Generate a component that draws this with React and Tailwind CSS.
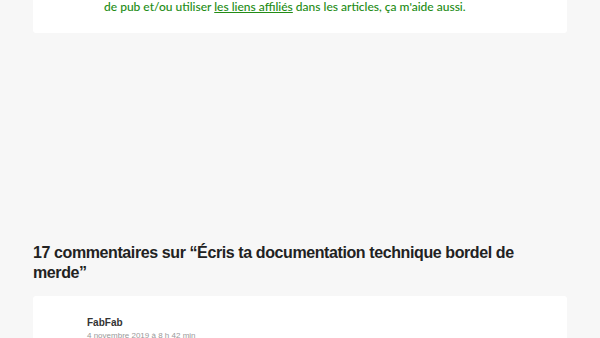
export default function App() {
  return (
    <div className="w-[600px] h-[338px] overflow-hidden bg-[#f7f7f7]">
      <div className="mx-[33px] -mt-[20px] bg-white rounded-b-[3px] pt-[19px] pb-[18px] pl-[71px]">
        <p
          className="text-[12px] leading-[16px] text-[#238c15] font-medium"
          style={{ fontFamily: 'Lato, sans-serif' }}
        >
          de pub et/ou utiliser <a className="underline">les liens affiliés</a> dans les articles, ça m'aide aussi.
        </p>
      </div>

      <div className="h-[210px]" />

      <h2
        className="mx-[33px] text-[16px] leading-[20px] font-bold text-[#222] tracking-[-0.4px]"
        style={{ fontFamily: '"Liberation Sans", Arial, sans-serif' }}
      >
        17 commentaires sur “Écris ta documentation technique bordel de merde”
      </h2>

      <div
        className="mx-[33px] mt-[13px] bg-white rounded-t-[3px] pt-[21px] pl-[54px]"
        style={{ fontFamily: '"Liberation Sans", Arial, sans-serif' }}
      >
        <div className="text-[10px] font-bold text-[#333] leading-[12px]">FabFab</div>
        <div className="text-[8px] text-[#999] leading-[10px] mt-[2px]">4 novembre 2019 à 8 h 42 min</div>
      </div>
    </div>
  );
}
